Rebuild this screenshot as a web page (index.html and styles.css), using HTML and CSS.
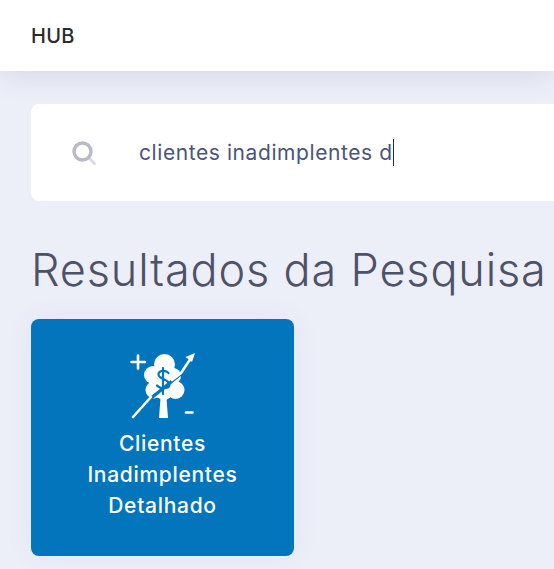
FILE: index.html
```html
<!DOCTYPE html>
<html lang="pt-BR">
<head>
<meta charset="UTF-8" />
<meta name="viewport" content="width=device-width, initial-scale=1" />
<title>HUB</title>
<link rel="stylesheet" href="styles.css">
</head>
<body>

  <header class="topbar">HUB</header>

  <main class="content">
    <div class="search">
      <svg class="search-icon" viewBox="0 0 24 24" aria-hidden="true">
        <line class="search-handle" x1="17" y1="17" x2="22.5" y2="22.5" />
        <circle class="search-ring" cx="10.5" cy="10.5" r="8.5" />
      </svg>
      <div class="search-text">clientes inadimplentes d<span class="caret"></span></div>
    </div>

    <h1 class="title">Resultados da Pesquisa</h1>

    <a class="result-card" href="#">
      <svg class="result-icon" viewBox="128 350 68 70" aria-hidden="true">
        <!-- tree -->
        <g class="tree">
          <circle cx="163.500" cy="364.500" r="10.500" />
          <circle cx="152" cy="375" r="9" />
          <circle cx="153" cy="390" r="8.500" />
          <circle cx="174.500" cy="390" r="9" />
          <circle cx="172" cy="376" r="8" />
          <circle cx="163" cy="391" r="9" />
          <circle cx="163" cy="378" r="12" />
          <path d="M160 392h5l2 26h-9z" />
        </g>
        <!-- dollar sign -->
        <path class="cut-thin" d="M167.500 373c-2-3-10-3-10 1.500 0 5 11 4.500 11 10 0 4.500-9 5-12.500 1M162 368v26" />
        <!-- arrow -->
        <path class="cut" d="M149 399 181 373" />
        <path class="line" d="M132 417 150 397" />
        <path class="line" d="M171 380 180 373 190 358" />
        <path class="head" d="M194 353 184.500 357 191 362z" />
        <!-- plus and minus -->
        <path class="line" d="M130.500 362h13.500M137 355.500v13" />
        <path class="line" d="M185 412.500h6.500" />
      </svg>
      <span class="result-label">Clientes Inadimplentes Detalhado</span>
    </a>
  </main>

</body>
</html>
```

FILE: styles.css
```css
html, body {
  margin: 0;
  padding: 0;
  height: 100%;
  overflow: hidden;
}

body {
  background: #eceef8;
  font-family: Inter, "Open Sans", sans-serif;
}

.topbar {
  height: 71px;
  box-sizing: border-box;
  padding: 0 31px;
  display: flex;
  align-items: center;
  background: white;
  color: #2b2b2e;
  font-size: 20px;
  font-weight: 500;
  letter-spacing: 0.3px;
  box-shadow: 0 4px 30px rgba(60, 60, 100, 0.12);
  position: relative;
}

.content {
  padding: 33px 0 0 31px;
}

/* runs off the right side of the window, so only the left corners are round */
.search {
  height: 97px;
  display: flex;
  align-items: center;
  background: white;
  border-radius: 8px 0 0 8px;
  padding-left: 41px;
}

.search-icon {
  width: 24px;
  height: 24px;
  flex: none;
  margin-right: 43px;
  fill: none;
  stroke-linecap: round;
}

.search-ring {
  stroke: #b9b9c9;
  stroke-width: 3.4px;
}

.search-handle {
  stroke: #dcdce6;
  stroke-width: 3px;
}

.search-text {
  display: flex;
  align-items: center;
  color: #4a5578;
  font-size: 21px;
  letter-spacing: 0.58px;
}

.caret {
  width: 1.5px;
  height: 27px;
  background: #1d2a4d;
}

.title {
  margin: 43px 0 23px;
  color: #4d5268;
  font-size: 45px;
  font-weight: 300;
  letter-spacing: 0.85px;
  line-height: 52px;
  white-space: nowrap;
}

.result-card {
  width: 263px;
  height: 237px;
  box-sizing: border-box;
  padding-top: 31px;
  display: flex;
  flex-direction: column;
  align-items: center;
  background: #0275bd;
  border-radius: 8px;
  box-shadow: 0 0 30px rgba(90, 90, 140, 0.06);
  text-decoration: none;
  color: white;
}

.result-icon {
  width: 68px;
  height: 70px;
  flex: none;
}

.tree { fill: white; }

.line, .cut, .cut-thin {
  fill: none;
  stroke-linecap: round;
  stroke-linejoin: round;
}

.line { stroke: white; stroke-width: 2.6px; }
.cut { stroke: #0275bd; stroke-width: 3.2px; }
.cut-thin { stroke: #0275bd; stroke-width: 2.2px; }
.head { fill: white; }

.result-label {
  width: 190px;
  margin-top: 8px;
  text-align: center;
  font-size: 21px;
  font-weight: 450;
  letter-spacing: 0.7px;
  line-height: 31px;
}
```
